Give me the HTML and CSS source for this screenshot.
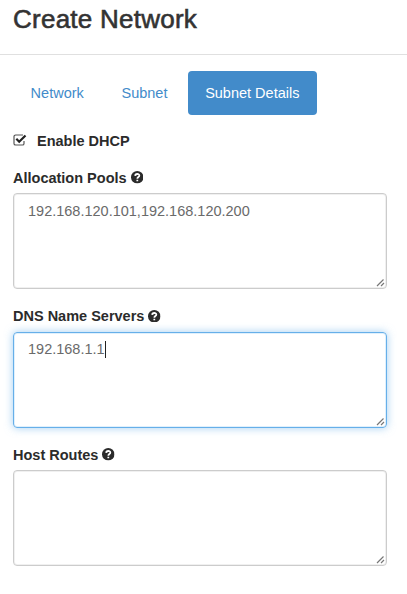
FILE: index.html
```html
<!DOCTYPE html>
<html lang="en">
<head>
<meta charset="utf-8">
<title>Create Network</title>
<link rel="stylesheet" href="styles.css">
</head>
<body>
<svg class="defs" width="0" height="0" aria-hidden="true">
  <symbol id="help" viewBox="0 0 12 12">
    <circle cx="6" cy="6" r="6" fill="#2b2b2b"/>
    <path d="M4 4.7C4.1 2.3 8 2.300 8 4.500C8 5.900 6.100 5.800 6.100 7.400" fill="none" stroke="#fff" stroke-width="1.700"/>
    <path d="M5.200 8.300h1.700v1.600H5.200z" fill="#fff"/>
  </symbol>
  <symbol id="grip" viewBox="0 0 9 9">
    <path d="M1 8L7.500 1.500M5 8L8 5" fill="none" stroke="#777" stroke-width="1.200"/>
  </symbol>
</svg>
<header class="header"><h1 class="title">Create Network</h1></header>
<main class="body">
  <nav class="tabs">
    <a class="tab">Network</a>
    <a class="tab">Subnet</a>
    <a class="tab active">Subnet Details</a>
  </nav>
  <div class="check">
    <svg class="checkbox" viewBox="0 0 14 12"><path d="M11 7v2.400a1.600 1.600 0 0 1-1.600 1.600H2.600A1.600 1.600 0 0 1 1 9.400V2.600A1.600 1.600 0 0 1 2.600 1H10" fill="none" stroke="#555" stroke-width="1.200"/><path d="M3.300 4.800L6.200 7.700L12.500 1.500" fill="none" stroke="#222" stroke-width="2.200"/></svg>
    <span class="text">Enable DHCP</span>
  </div>
  <section class="group">
    <div class="label"><span class="text">Allocation Pools</span><svg class="help"><use href="#help"/></svg></div>
    <div class="area"><span class="value">192.168.120.101,192.168.120.200</span><svg class="grip"><use href="#grip"/></svg></div>
  </section>
  <section class="group">
    <div class="label"><span class="text">DNS Name Servers</span><svg class="help"><use href="#help"/></svg></div>
    <div class="area focused"><span class="value">192.168.1.1</span><i class="caret"></i><svg class="grip"><use href="#grip"/></svg></div>
  </section>
  <section class="group">
    <div class="label"><span class="text">Host Routes</span><svg class="help"><use href="#help"/></svg></div>
    <div class="area"><svg class="grip"><use href="#grip"/></svg></div>
  </section>
</main>
</body>
</html>
```
FILE: styles.css
```css
* { box-sizing: border-box; }
body { margin: 0; height: 594px; overflow: hidden; background: #fff; color: #2b2b2b; font-family: "Liberation Sans", Arial, sans-serif; font-size: 14.5px; }
.defs { position: absolute; }
.header { height: 55px; padding: 4px 13px 0; border-bottom: 1px solid #e0e0e0; }
.title { margin: 0; font-size: 26px; line-height: 30px; font-weight: 500; letter-spacing: .25px; color: #333; white-space: nowrap; -webkit-text-stroke: .6px #333; }
.body { padding: 16px 20px 0 13px; }
.tabs { display: flex; gap: 2.5px; height: 44px; }
.tab { padding: 0 17.6px; line-height: 44px; color: #428bca; white-space: nowrap; border-radius: 4px; }
.active { color: #fff; background: #428bca; }
.check { display: flex; align-items: center; height: 18px; margin-top: 17px; font-weight: bold; }
.checkbox { width: 14px; height: 12px; margin: -3px 10px 0 0; }
.group { margin-top: 19px; height: 119.5px; }
.label { display: flex; align-items: center; gap: 4px; height: 18px; font-weight: bold; white-space: nowrap; }
.label .text { margin-top: -1px; }
.help { width: 12.5px; height: 12.5px; margin-top: -1px; }
.area { position: relative; display: flex; height: 96px; margin-top: 6px; padding: 7px 14px; border: 1px solid #ccc; border-radius: 4px; box-shadow: inset 0 0 0 1px #f0f0f0; line-height: 20px; color: #6a6a6a; }
.focused { padding-top: 6px; border-color: #66afe9; box-shadow: inset 0 0 0 1px #e0f0fc, 0 0 8px rgba(102,175,233,.6); }
.caret { width: 1px; height: 17px; margin-top: 2px; background: #222; }
.grip { position: absolute; right: 1px; bottom: 1px; width: 9px; height: 9px; }
```
